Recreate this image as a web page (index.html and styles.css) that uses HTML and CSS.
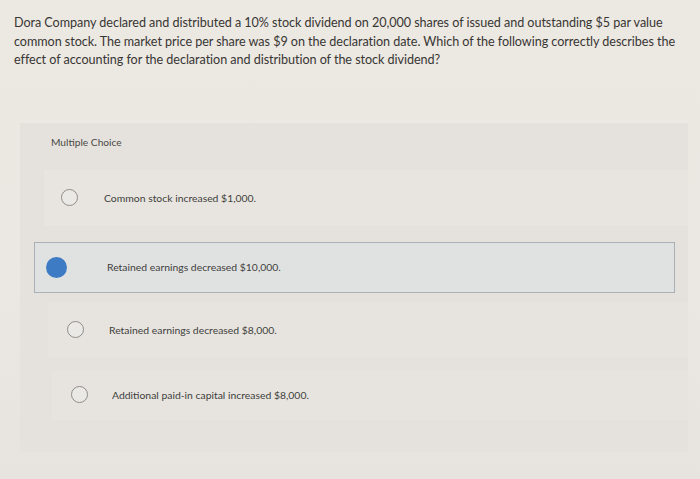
FILE: index.html
```html
<!DOCTYPE html>
<html>
<head>
<meta charset="utf-8">
<link rel="stylesheet" href="styles.css">
</head>
<body>
<div class="page">
  <p class="question">Dora Company declared and distributed a 10% stock dividend on 20,000 shares of issued and outstanding $5 par value common stock. The market price per share was $9 on the declaration date. Which of the following correctly describes the effect of accounting for the declaration and distribution of the stock dividend?</p>
  <div class="panel">
    <div class="panel-head">Multiple Choice</div>
    <div class="options">
      <div class="option opt1"><span class="radio"></span><span class="label">Common stock increased $1,000.</span></div>
      <div class="option opt2 selected"><span class="radio"></span><span class="label">Retained earnings decreased $10,000.</span></div>
      <div class="option opt3"><span class="radio"></span><span class="label">Retained earnings decreased $8,000.</span></div>
      <div class="option opt4"><span class="radio"></span><span class="label">Additional paid-in capital increased $8,000.</span></div>
    </div>
  </div>
</div>
</body>
</html>
```
FILE: styles.css
```css
html, body {
  margin: 0;
  padding: 0;
}
body {
  width: 700px;
  height: 479px;
  overflow: hidden;
  background: linear-gradient(180deg, #ece8e2 0%, #ebe8e3 60%, #e7e4df 100%);
  font-family: Lato, "Open Sans", sans-serif;
  color: #3a3836;
}
.page {
  padding: 14px 0 0 14px;
}
.question {
  margin: 0;
  width: 672px;
  font-size: 12.6px;
  line-height: 18.5px;
  color: #383633;
  letter-spacing: -0.05px;
}
.panel {
  margin: 53px 0 0 6px;
  width: 668px;
  height: 329px;
  background: #e5e2dd;
  box-sizing: border-box;
}
.panel-head {
  padding: 13px 0 0 31px;
  height: 32px;
  font-size: 10.2px;
  line-height: 12px;
  color: #4a4845;
  box-sizing: border-box;
}
.options {
  display: flex;
  flex-direction: column;
  padding-top: 15px;
}
.option {
  display: flex;
  align-items: center;
  font-size: 10.4px;
  color: #403e3b;
}
.radio {
  width: 17px;
  height: 17px;
  border: 1.3px solid #8e8c88;
  border-radius: 50%;
  box-sizing: border-box;
  background: #ebe9e5;
  flex: none;
}
.opt1 {
  height: 56px;
  margin-bottom: 16px;
  background: #e8e5e0;
  margin-left: 24px;
  padding-left: 17px;
}
.opt1 .label { margin-left: 26px; }
.selected {
  margin-left: 14px;
  width: 641px;
  height: 51px;
  border: 1px solid #a9b0b6;
  background: #e0e2e2;
  box-sizing: border-box;
  padding-left: 11px;
}
.selected .radio {
  width: 21px;
  height: 21px;
  border: none;
  background: #3d7bc4;
}
.selected .label { margin-left: 40px; }
.opt3 {
  margin-top: 10px;
  height: 54px;
  margin-left: 28px;
  padding-left: 19px;
  background: #e7e4df;
}
.opt3 .label { margin-left: 25px; }
.opt4 {
  margin-top: 13px;
  height: 50px;
  margin-left: 32px;
  padding-left: 19px;
  background: #e7e4df;
}
.opt4 .label { margin-left: 24px; }
```
